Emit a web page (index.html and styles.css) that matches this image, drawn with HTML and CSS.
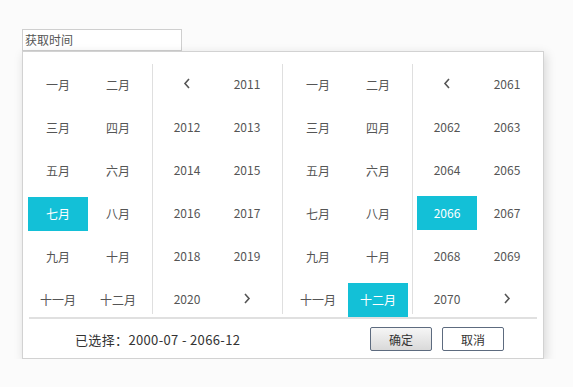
FILE: index.html
```html
<!DOCTYPE html>
<html lang="zh">
<head>
  <meta charset="UTF-8" />
  <meta name="viewport" content="width=device-width, initial-scale=1.0"/>
  <title>获取时间</title>
  <link rel="stylesheet" href="styles.css">
</head>
<body>
    <div class="picker">
        <div class="field">获取时间</div>

        <div class="dropdown">
            <div class="panels">
                <div class="panel month">
                    <div class="cell">一月</div><div class="cell">二月</div>
                    <div class="cell">三月</div><div class="cell">四月</div>
                    <div class="cell">五月</div><div class="cell">六月</div>
                    <div class="cell active">七月</div><div class="cell">八月</div>
                    <div class="cell">九月</div><div class="cell">十月</div>
                    <div class="cell">十一月</div><div class="cell">十二月</div>
                </div>
                <div class="panel year">
                    <div class="cell arrow"><svg width="8" height="11" viewBox="0 0 8 11"><polyline points="6,1 2,5.5 6,10" /></svg></div>
                    <div class="cell">2011</div>
                    <div class="cell">2012</div><div class="cell">2013</div>
                    <div class="cell">2014</div><div class="cell">2015</div>
                    <div class="cell">2016</div><div class="cell">2017</div>
                    <div class="cell">2018</div><div class="cell">2019</div>
                    <div class="cell">2020</div>
                    <div class="cell arrow"><svg width="8" height="11" viewBox="0 0 8 11"><polyline points="2,1 6,5.5 2,10" /></svg></div>
                </div>
                <div class="panel month">
                    <div class="cell">一月</div><div class="cell">二月</div>
                    <div class="cell">三月</div><div class="cell">四月</div>
                    <div class="cell">五月</div><div class="cell">六月</div>
                    <div class="cell">七月</div><div class="cell">八月</div>
                    <div class="cell">九月</div><div class="cell">十月</div>
                    <div class="cell">十一月</div><div class="cell active">十二月</div>
                </div>
                <div class="panel year">
                    <div class="cell arrow"><svg width="8" height="11" viewBox="0 0 8 11"><polyline points="6,1 2,5.5 6,10" /></svg></div>
                    <div class="cell">2061</div>
                    <div class="cell">2062</div><div class="cell">2063</div>
                    <div class="cell">2064</div><div class="cell">2065</div>
                    <div class="cell active">2066</div><div class="cell">2067</div>
                    <div class="cell">2068</div><div class="cell">2069</div>
                    <div class="cell">2070</div>
                    <div class="cell arrow"><svg width="8" height="11" viewBox="0 0 8 11"><polyline points="2,1 6,5.5 2,10" /></svg></div>
                </div>
            </div>

            <div class="divider"></div>

            <div class="footer">
                <span class="result">已选择：2000-07 - 2066-12</span>
                <div class="actions">
                    <button class="btn ok">确定</button>
                    <button class="btn">取消</button>
                </div>
            </div>
        </div>
    </div>
</body>
</html>
```

FILE: styles.css
```css
* {
    margin: 0;
    padding: 0;
    box-sizing: border-box;
}

body {
    background-color: #fbfbfb;
    font-family: "Noto Sans CJK SC", "Noto Sans", sans-serif;
    font-size: 12px;
    color: #555;
    padding: 29px 0 0 22px;
}

.picker {
    width: 521px;
}

/* Input */
.field {
    width: 160px;
    height: 22px;
    line-height: 20px;
    padding-left: 2px;
    border: 1px solid #cfcfcf;
    background-color: #fff;
    color: #555;
}

/* Dropdown */
.dropdown {
    width: 522px;
    background-color: #fff;
    border: 1px solid #d2d2d2;
    box-shadow: 2px 3px 10px rgba(0, 0, 0, 0.15);
    padding-top: 12px;
}

.panels {
    display: flex;
    height: 250px;
}

.panel {
    display: grid;
    grid-template-columns: 60px 60px;
    grid-auto-rows: 34px;
    row-gap: 9px;
    align-content: start;
    height: 250px;
    border-left: 1px solid #dfdfdf;
}

.panel:first-child {
    border-left: none;
}

.month {
    padding: 4px 4px 0 5px;
}

.year {
    padding: 3px 5px 0 4px;
}

.cell {
    display: flex;
    align-items: center;
    justify-content: center;
    padding-bottom: 2px;
    color: #555;
    cursor: pointer;
}

.cell.active {
    background-color: #13c0d7;
    color: #fff;
}

.arrow svg polyline {
    fill: none;
    stroke: #555;
    stroke-width: 1.6;
}

.divider {
    height: 2px;
    margin: 3px 0 0 6px;
    width: 508px;
    background-color: #e0e0e0;
}

/* Footer */
.footer {
    display: flex;
    align-items: center;
    justify-content: space-between;
    padding: 8px 39px 7px 52px;
}

.result {
    font-size: 13px;
    letter-spacing: 0.35px;
    color: #333;
}

.actions {
    display: flex;
    gap: 10px;
}

.btn {
    width: 62px;
    height: 24px;
    border: 1px solid #5d6b7f;
    border-radius: 2px;
    background-color: #fff;
    color: #333;
    font-family: inherit;
    font-size: 12px;
    cursor: pointer;
}

.btn.ok {
    background: linear-gradient(#f6f6f6, #d9d9d9);
}
```
